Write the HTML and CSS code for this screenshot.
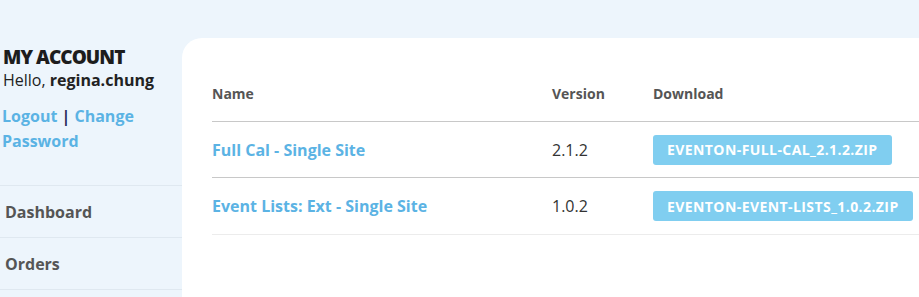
FILE: index.html
```html
<!DOCTYPE html>
<html>
<head>
<meta charset="utf-8">
<link rel="stylesheet" href="styles.css">
</head>
<body>
<div class="page">
  <aside class="sidebar">
    <div class="account">
      <h2 class="account-title">MY ACCOUNT</h2>
      <p class="hello">Hello, <strong>regina.chung</strong></p>
      <p class="links"><a href="#">Logout</a> | <a href="#">Change Password</a></p>
    </div>
    <ul class="nav">
      <li><a href="#">Dashboard</a></li>
      <li><a href="#">Orders</a></li>
    </ul>
  </aside>
  <main class="card">
    <table class="downloads">
      <thead>
        <tr><th class="c-name">Name</th><th class="c-ver">Version</th><th class="c-dl">Download</th></tr>
      </thead>
      <tbody>
        <tr>
          <td class="c-name"><a href="#">Full Cal - Single Site</a></td>
          <td class="c-ver">2.1.2</td>
          <td class="c-dl"><a class="btn" href="#">eventon-full-cal_2.1.2.zip</a></td>
        </tr>
        <tr class="last">
          <td class="c-name"><a href="#">Event Lists: Ext - Single Site</a></td>
          <td class="c-ver">1.0.2</td>
          <td class="c-dl"><a class="btn" href="#">eventon-event-lists_1.0.2.zip</a></td>
        </tr>
      </tbody>
    </table>
  </main>
</div>
</body>
</html>
```
FILE: styles.css
```css
html, body {
  margin: 0;
  padding: 0;
}
body {
  background: #edf5fc;
  font-family: "Open Sans", "Noto Sans", sans-serif;
  color: #222;
  width: 919px;
  height: 297px;
  overflow: hidden;
}
a { text-decoration: none; }
.page {
  display: flex;
  align-items: flex-start;
  height: 297px;
  overflow: hidden;
}
.sidebar {
  width: 182px;
  flex: none;
}
.account {
  padding: 45px 0 0 3px;
  height: 185px;
  box-sizing: border-box;
}
.account-title {
  margin: 0;
  font-size: 19px;
  font-weight: 800;
  letter-spacing: -0.95px;
  line-height: 24px;
  color: #1d1d1d;
}
.hello {
  margin: 0;
  font-size: 16px;
  line-height: 23px;
  color: #222;
}
.hello strong { font-weight: 700; }
.links {
  margin: 12px 0 0 -1px;
  font-size: 16px;
  font-weight: 700;
  line-height: 25px;
  color: #2a2a5a;
  width: 150px;
}
.links a { color: #5bb3e4; }
.nav {
  list-style: none;
  margin: 0;
  padding: 0;
  border-top: 1px solid #dfe8f0;
}
.nav li {
  border-bottom: 1px solid #dfe8f0;
  height: 51px;
  display: flex;
  align-items: center;
  padding-left: 5px;
}
.nav a {
  font-size: 16px;
  font-weight: 700;
  color: #555;
}
.card {
  flex: none;
  width: 760px;
  margin-top: 38px;
  height: 300px;
  background: #fff;
  border-top-left-radius: 20px;
  padding: 28px 0 0 30px;
  box-sizing: border-box;
}
.downloads {
  border-collapse: collapse;
  width: 730px;
}
.downloads th {
  text-align: left;
  font-size: 14px;
  font-weight: 700;
  color: #555;
  height: 55px;
  padding: 0;
  border-bottom: 1px solid #c8c8c8;
}
.downloads td {
  padding: 0;
  height: 55px;
  border-bottom: 1px solid #c8c8c8;
  font-size: 16px;
  color: #333;
}
.downloads tr.last td {
  height: 56px;
  border-bottom-color: #ececec;
}
.c-name { width: 340px; }
.c-ver { width: 101px; }
.c-name a {
  color: #5bb3e4;
  font-weight: 700;
}
.btn {
  display: inline-flex;
  align-items: center;
  height: 30px;
  vertical-align: middle;
  background: #80cef0;
  color: #fff;
  font-size: 14px;
  font-weight: 700;
  letter-spacing: 0.42px;
  text-transform: uppercase;
  padding: 0 14px;
  border-radius: 3px;
}
```
